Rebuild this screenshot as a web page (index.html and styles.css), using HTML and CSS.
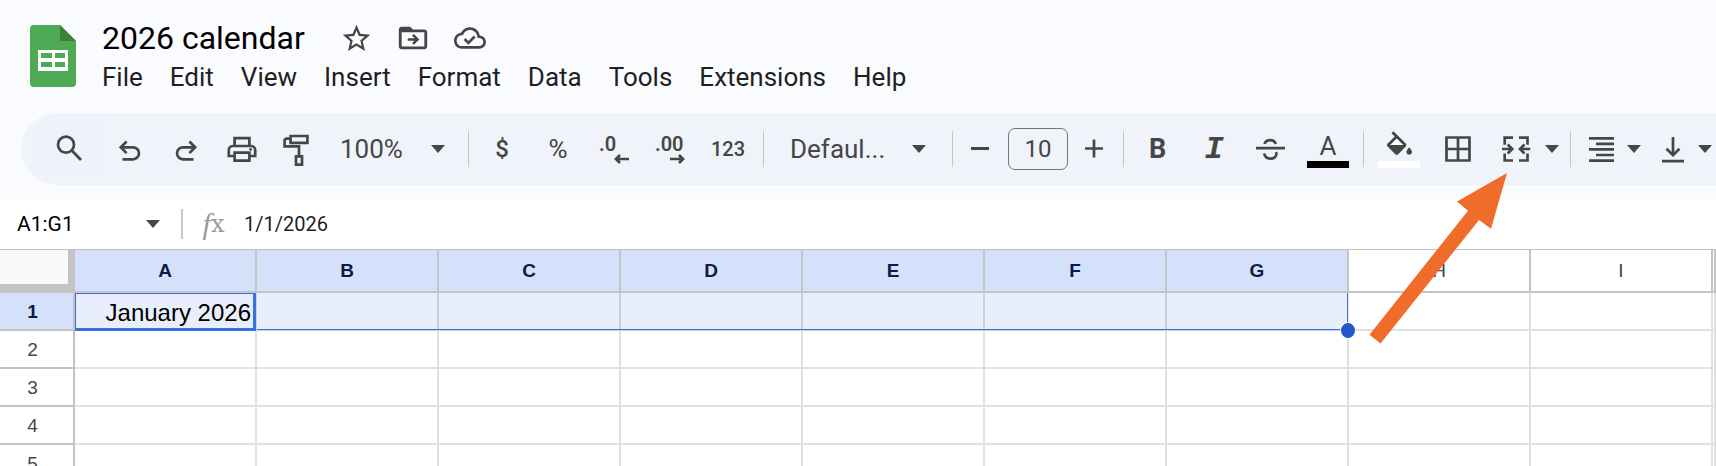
FILE: index.html
```html
<!DOCTYPE html>
<html lang="en">
<head>
<meta charset="utf-8">
<title>2026 calendar</title>
<link rel="stylesheet" href="styles.css">
</head>
<body>
<header class="header">
  <a class="logo" href="#" aria-label="Sheets home">
    <svg width="46" height="62" viewBox="0 0 46 62">
      <path fill="#4eaa55" d="M4 0h26l16 16v42a4 4 0 0 1-4 4H4a4 4 0 0 1-4-4V4a4 4 0 0 1 4-4z"/>
      <path fill="#3a8139" d="M30 0l16 16H30z"/>
      <path fill="#fff" fill-rule="evenodd" d="M8 25h30v21H8zM11 28v5h11v-5zM25 28v5h10v-5zM11 37v5h11v-5zM25 37v5h10v-5z"/>
    </svg>
  </a>
  <div class="heading">
    <div class="title-row">
      <h1 class="title">2026 calendar</h1>
      <button class="title-button" aria-label="Star">
        <svg width="33" height="33" viewBox="0 0 24 24" fill="currentColor"><path d="M22 9.24l-7.19-.62L12 2 9.19 8.63 2 9.24l5.46 4.73L5.82 21 12 17.27 18.18 21l-1.63-7.03L22 9.24zM12 15.4l-3.76 2.27 1-4.28-3.32-2.88 4.38-.38L12 6.1l1.71 4.04 4.38.38-3.32 2.88 1 4.28L12 15.4z"/></svg>
      </button>
      <button class="title-button" aria-label="Move">
        <svg width="34" height="34" viewBox="0 0 24 24" fill="currentColor"><path d="M20 6h-8l-2-2H4c-1.1 0-2 .9-2 2v12c0 1.1.9 2 2 2h16c1.1 0 2-.9 2-2V8c0-1.1-.9-2-2-2zm0 12H4V8h16v10z"/><path d="M8.3 13h6.5M12 9.8l3.2 3.2-3.2 3.2" fill="none" stroke="currentColor" stroke-width="1.8"/></svg>
      </button>
      <button class="title-button" aria-label="See document status">
        <svg width="32" height="32" viewBox="0 0 24 24" fill="currentColor"><path d="M19.35 10.04C18.67 6.59 15.64 4 12 4 9.11 4 6.6 5.64 5.35 8.04 2.34 8.36 0 10.91 0 14c0 3.31 2.69 6 6 6h13c2.76 0 5-2.24 5-5 0-2.64-2.05-4.78-4.65-4.96zM19 18H6c-2.21 0-4-1.79-4-4 0-2.05 1.53-3.76 3.56-3.97l1.07-.11.5-.95C8.08 7.14 9.94 6 12 6c2.62 0 4.88 1.86 5.39 4.43l.3 1.5 1.53.11c1.56.1 2.78 1.41 2.78 2.96 0 1.65-1.35 3-3 3zm-8.2-3.82l-2.09-2.09L7.3 13.5l3.5 3.5 5.41-5.41-1.41-1.41z"/></svg>
      </button>
    </div>
    <nav class="menu" aria-label="Menu bar">
      <button>File</button>
      <button>Edit</button>
      <button>View</button>
      <button>Insert</button>
      <button>Format</button>
      <button>Data</button>
      <button>Tools</button>
      <button>Extensions</button>
      <button>Help</button>
    </nav>
  </div>
</header>

<div class="toolbar" role="toolbar" aria-label="Main toolbar">
  <button class="tool search" aria-label="Search the menus">
    <svg class="icon" viewBox="0 0 32 32"><circle cx="12" cy="11.7" r="8"/><path d="M17.6 17.3L27 27"/></svg>
  </button>
  <button class="tool" aria-label="Undo">
    <svg class="icon" viewBox="0 0 32 32"><path d="M12.6 8.5L6.8 14.3l5.8 5.8M7 14.3h12a6 6 0 0 1 0 12H8.5"/></svg>
  </button>
  <button class="tool" aria-label="Redo">
    <svg class="icon" viewBox="0 0 32 32"><path d="M19.4 8.5l5.8 5.8-5.8 5.8M25 14.3H13a6 6 0 0 0 0 12h10.5"/></svg>
  </button>
  <button class="tool" aria-label="Print">
    <svg class="icon" viewBox="0 0 32 32"><path d="M8.6 12.6V5.2h14.8v7.4M8.6 23H2.8v-6a4 4 0 0 1 4-4h18.4a4 4 0 0 1 4 4v6h-5.8M8.6 19.6h14.8v8H8.6z"/><circle class="solid" cx="24.6" cy="16.4" r="1.4"/></svg>
  </button>
  <button class="tool" aria-label="Paint format">
    <svg class="icon" viewBox="0 0 32 32"><path d="M8.6 3h16.8v6.8H8.6zM8 5.6H4.6a2 2 0 0 0-2 2v5.8H17v9.2M14 23.3h6v8.4h-6z"/></svg>
  </button>
  <span class="picker zoom">
    <select aria-label="Zoom"><option>100%</option></select>
    <svg class="caret" viewBox="0 0 14 8"><path d="M0 0h14L7 8z"/></svg>
  </span>
  <span class="divider"></span>
  <button class="tool currency" aria-label="Format as currency">$</button>
  <button class="tool" aria-label="Format as percent">%</button>
  <button class="tool" aria-label="Decrease decimal places">
    <span class="decimal">.0<svg class="small-arrow" viewBox="0 0 15 10"><path d="M15 5H2M6 1L2 5l4 4"/></svg></span>
  </button>
  <button class="tool" aria-label="Increase decimal places">
    <span class="decimal">.00<svg class="small-arrow" viewBox="0 0 15 10"><path d="M0 5h13M9 1l4 4-4 4"/></svg></span>
  </button>
  <button class="tool wide number" aria-label="More formats">123</button>
  <span class="divider"></span>
  <span class="picker font">
    <select aria-label="Font"><option>Defaul...</option></select>
    <svg class="caret" viewBox="0 0 14 8"><path d="M0 0h14L7 8z"/></svg>
  </span>
  <span class="divider"></span>
  <button class="tool step" aria-label="Decrease font size">
    <svg class="icon" viewBox="0 0 32 32"><path d="M7 15.5h18" stroke-width="3"/></svg>
  </button>
  <input class="size" aria-label="Font size" value="10">
  <button class="tool step" aria-label="Increase font size">
    <svg class="icon" viewBox="0 0 32 32"><path d="M5 15.5h18M14 6.5v18"/></svg>
  </button>
  <span class="divider"></span>
  <button class="tool bold" aria-label="Bold">B</button>
  <button class="tool italic" aria-label="Italic">I</button>
  <button class="tool" aria-label="Strikethrough">
    <svg class="icon" viewBox="0 0 32 32"><path d="M2 15.2h29M10.6 11c.6-2.4 2.7-3.9 5.6-3.9s4.9 1.5 5.6 3.9M10.2 20.5c.6 3.3 2.8 5.1 6.2 5.1 3.6 0 6-1.8 6-4.5 0-.8-.1-1.4-.4-2"/></svg>
  </button>
  <button class="tool wide" aria-label="Text color">
    <span class="swatch"><span class="letter">A</span><span class="bar black"></span></span>
  </button>
  <span class="divider"></span>
  <button class="tool wide" aria-label="Fill color">
    <span class="swatch"><svg class="bucket" viewBox="3 0 18 17"><path fill="#fff" d="M5.2 10L10 5.2 14.8 10z"/><path d="M16.56 8.94L7.62 0 6.21 1.41l2.38 2.38-5.15 5.15c-.59.59-.59 1.54 0 2.12l5.5 5.5c.29.29.68.44 1.06.44s.77-.15 1.06-.44l5.5-5.5c.59-.58.59-1.53 0-2.12zM5.21 10L10 5.21 14.79 10H5.21zM19 11.5s-2 2.17-2 3.5c0 1.1.9 2 2 2s2-.9 2-2c0-1.33-2-3.5-2-3.5z"/></svg><span class="bar white"></span></span>
  </button>
  <button class="tool" aria-label="Borders">
    <svg class="icon" viewBox="0 0 32 32"><path d="M5.5 4.5h23v23h-23zM17 4.5v23M5.5 16h23"/></svg>
  </button>
  <button class="tool wide" aria-label="Merge cells">
    <svg class="icon" viewBox="0 0 32 32"><path d="M14 4.7H5.7v7M14 27.5H5.7v-7M20 4.7h8.5v7M20 27.5h8.5v-7M3 16h10M8.7 11.5l4.5 4.5-4.5 4.5M31.2 16h-10M25.5 11.5L21 16l4.5 4.5"/></svg>
  </button>
  <button class="drop" aria-label="Merge options"><svg class="caret" viewBox="0 0 14 8"><path d="M0 0h14L7 8z"/></svg></button>
  <span class="divider"></span>
  <button class="tool narrow" aria-label="Horizontal align">
    <svg class="icon" viewBox="0 0 32 32"><path d="M3 5.3h25M10 10.9h18M3 16.4h25M10 22h18M3 27.6h25"/></svg>
  </button>
  <button class="drop" aria-label="Horizontal align options"><svg class="caret" viewBox="0 0 14 8"><path d="M0 0h14L7 8z"/></svg></button>
  <button class="tool narrow" aria-label="Vertical align">
    <svg class="icon" viewBox="0 0 32 32"><path d="M16 4v18M9.5 15.7l6.5 6.5 6.5-6.5M5 28.2h22"/></svg>
  </button>
  <button class="drop" aria-label="Vertical align options"><svg class="caret" viewBox="0 0 14 8"><path d="M0 0h14L7 8z"/></svg></button>
</div>

<main class="workspace">
  <div class="formula-bar">
    <input class="name-box" aria-label="Name box" value="A1:G1">
    <button class="name-drop" aria-label="Named ranges"><svg class="caret" viewBox="0 0 14 8"><path d="M0 0h14L7 8z"/></svg></button>
    <label class="fx" for="formula"><i>f</i><span>x</span></label>
    <input class="formula" id="formula" value="1/1/2026">
  </div>
  <div class="grid">
    <table class="sheet">
      <colgroup><col class="col-head"><col class="col"><col class="col"><col class="col"><col class="col"><col class="col"><col class="col"><col class="col"><col class="col"><col class="col"><col></colgroup>
      <thead>
        <tr><td class="corner"></td><th class="on">A</th><th class="on">B</th><th class="on">C</th><th class="on">D</th><th class="on">E</th><th class="on">F</th><th class="on">G</th><th>H</th><th>I</th><td></td></tr>
      </thead>
      <tbody>
        <tr><th class="on">1</th><td class="sel active">January 2026</td><td class="sel"></td><td class="sel"></td><td class="sel"></td><td class="sel"></td><td class="sel"></td><td class="sel last"><span class="handle"></span></td><td></td><td></td><td></td></tr>
        <tr><th>2</th><td></td><td></td><td></td><td></td><td></td><td></td><td></td><td></td><td></td><td></td></tr>
        <tr><th>3</th><td></td><td></td><td></td><td></td><td></td><td></td><td></td><td></td><td></td><td></td></tr>
        <tr><th>4</th><td></td><td></td><td></td><td></td><td></td><td></td><td></td><td></td><td></td><td></td></tr>
        <tr><th>5</th><td></td><td></td><td></td><td></td><td></td><td></td><td></td><td></td><td></td><td></td></tr>
      </tbody>
    </table>
  </div>
</main>

<svg class="pointer" viewBox="0 0 138 171" aria-hidden="true"><path d="M138 0L88 28.5l11 9.2L.5 161.7 11.5 170.5 110 47l12 8.7z"/></svg>
</body>
</html>
```
FILE: styles.css
```css
* {
  box-sizing: border-box;
}

body {
  display: flex;
  flex-direction: column;
  height: 100vh;
  margin: 0;
  overflow: hidden;
  position: relative;
  background: #fafbfe;
  color: #1f1f1f;
  font-family: Roboto, "Liberation Sans", sans-serif;
}

button,
input,
select {
  margin: 0;
  padding: 0;
  border: 0;
  background: none;
  color: inherit;
  font: inherit;
  outline: 0;
}

svg {
  display: block;
  flex: none;
  overflow: visible;
}

.header {
  display: flex;
  flex: none;
  gap: 26px;
  padding: 18px 30px 17px;
}

.logo {
  padding-top: 7px;
}

.title-row {
  display: flex;
  align-items: center;
  height: 40px;
}

.title {
  margin: 0 23px 0 0;
  color: #000;
  font-size: 32px;
  font-weight: 400;
  line-height: 38px;
}

.title-button {
  display: flex;
  justify-content: center;
  width: 57px;
  color: #444746;
}

.menu {
  display: flex;
  gap: 27px;
  font-size: 26px;
  line-height: 38px;
}

.toolbar {
  display: flex;
  flex: none;
  align-items: center;
  height: 72px;
  margin: 0 0 14px 21px;
  padding-left: 16px;
  border-radius: 36px 0 0 36px;
  background: #f0f3f9;
  color: #444746;
  font-size: 26px;
}

.tool {
  display: flex;
  flex: none;
  align-items: center;
  justify-content: center;
  width: 56px;
  height: 50px;
}

.tool.search {
  width: 65px;
  border-radius: 4px;
  background: #eef2fb;
}

.tool.wide {
  width: 60px;
}

.tool.step {
  width: 44px;
}

.tool.narrow {
  width: 51px;
}

.icon {
  width: 32px;
  height: 32px;
  fill: none;
  stroke: currentColor;
  stroke-width: 2.7;
}

.icon .solid {
  fill: currentColor;
  stroke: none;
}

.caret {
  width: 14px;
  height: 8px;
  fill: #444746;
}

.drop {
  display: flex;
  flex: none;
  align-items: center;
  width: 20px;
  height: 50px;
}

.divider {
  flex: none;
  width: 1px;
  height: 36px;
  margin: 0 5px;
  background: #c7c7c7;
}

.picker {
  display: grid;
  flex: none;
  align-items: center;
}

.picker select,
.picker .caret {
  grid-area: 1 / 1;
}

.picker select {
  width: 100%;
  height: 50px;
  appearance: none;
}

.picker .caret {
  justify-self: end;
  pointer-events: none;
}

.zoom {
  width: 137px;
}

.zoom select {
  padding-left: 14px;
}

.zoom .caret {
  margin-right: 18px;
}

.font {
  width: 178px;
}

.font select {
  padding-left: 21px;
}

.font .caret {
  margin-right: 21px;
}

.currency {
  font-size: 24px;
  font-weight: 500;
}

.number {
  font-size: 20px;
  font-weight: 500;
}

.decimal {
  width: 30px;
  font-size: 20px;
  font-weight: 600;
  line-height: 20px;
  text-align: left;
}

.small-arrow {
  width: 15px;
  height: 10px;
  margin-left: auto;
  fill: none;
  stroke: currentColor;
  stroke-width: 2.7;
}

.size {
  flex: none;
  width: 60px;
  height: 42px;
  margin: 0 6px;
  border: 1px solid #747775;
  border-radius: 7px;
  font-size: 24px;
  text-align: center;
}

.tool.bold {
  width: 57px;
  font-size: 27px;
  font-weight: 700;
}

.italic {
  font-family: "Liberation Mono", monospace;
  font-size: 32px;
  font-style: italic;
  font-weight: 700;
}

.swatch {
  display: flex;
  flex-direction: column;
  align-items: center;
}

.letter {
  font-size: 26px;
  font-weight: 400;
  line-height: 30px;
}

.bucket {
  width: 25px;
  height: 24px;
  margin-bottom: 6px;
  fill: currentColor;
}

.bar {
  width: 42px;
  height: 7px;
}

.black {
  background: #000;
}

.white {
  background: #fff;
}

.workspace {
  display: flex;
  flex: 1;
  flex-direction: column;
  min-height: 0;
  background: #fff;
}

.formula-bar {
  display: flex;
  flex: none;
  align-items: center;
  height: 50px;
  padding-left: 17px;
}

.name-box {
  width: 119px;
  color: #000;
  font-size: 21px;
}

.name-drop {
  display: flex;
  justify-content: center;
  width: 34px;
}

.fx {
  display: flex;
  align-items: center;
  justify-content: center;
  width: 63px;
  height: 30px;
  margin-left: 11px;
  border-left: 2px solid #c7c7c7;
  color: #9a9a9a;
  font-family: "DejaVu Serif", serif;
  font-size: 24px;
}

.fx i {
  font-family: "Liberation Serif", serif;
  font-size: 30px;
}

.formula {
  flex: 1;
  min-width: 0;
  font-size: 20px;
}

.grid {
  flex: 1;
  min-height: 0;
  overflow: hidden;
  border-top: 1px solid #c0c0c0;
}

.sheet {
  width: 100%;
  border-spacing: 0;
  table-layout: fixed;
}

.col-head {
  width: 75px;
}

.col {
  width: 182px;
}

.sheet th,
.sheet td {
  height: 38px;
  padding: 0;
  border: solid #e1e1e1;
  border-width: 0 2px 2px 0;
}

.sheet th {
  border-color: #c4c4c4;
  color: #444746;
  font-family: "Liberation Sans", sans-serif;
  font-size: 19px;
  font-weight: 400;
  line-height: 22px;
}

.sheet tbody th {
  padding: 2px 8px 0 0;
}

.sheet th.on {
  background: #d5e0fb;
  color: #0b1c47;
  font-weight: 700;
}

.sheet thead th,
.sheet thead td {
  height: 43px;
  border-color: #c4c4c4;
}

.sheet .corner {
  border-width: 0 7px 9px 0;
  background: #f8f9fb;
}

.sheet .sel {
  position: relative;
  border-color: #c9cfdd;
  background: #e8eefb;
}

.sel::after {
  content: "";
  position: absolute;
  right: -2px;
  bottom: -1px;
  left: 0;
  height: 1px;
  background: #3871e0;
}

.sheet .active {
  padding: 4px 4px 0 0;
  color: #000;
  font-family: "Liberation Sans", sans-serif;
  font-size: 24px;
  line-height: 32px;
  text-align: right;
}

.active::after {
  top: 0;
  right: -1px;
  bottom: -2px;
  height: auto;
  border: solid #3871e0;
  border-width: 1px 3px 3px 1px;
  background: none;
}

.sheet .last {
  border-right-color: #e1e1e1;
}

.last::before {
  content: "";
  position: absolute;
  top: 0;
  right: -1px;
  bottom: 0;
  width: 1px;
  background: #3871e0;
}

.handle {
  position: absolute;
  right: -9px;
  bottom: -10px;
  z-index: 1;
  width: 16px;
  height: 17px;
  border: 1px solid #fff;
  border-radius: 50%;
  background: #2456cc;
}

.pointer {
  position: absolute;
  top: 173px;
  left: 1369px;
  width: 138px;
  height: 171px;
  fill: #ef6c2b;
  pointer-events: none;
}
```
